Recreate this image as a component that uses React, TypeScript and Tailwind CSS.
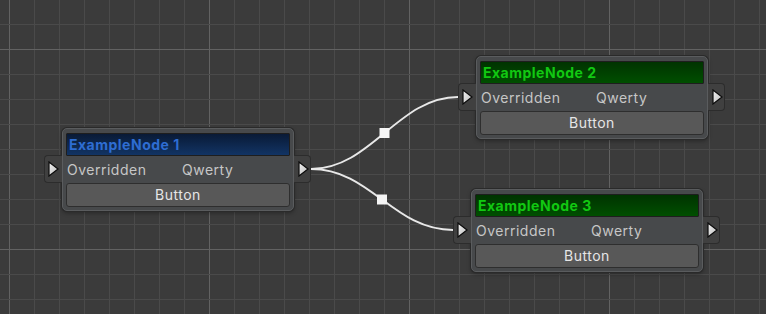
import React from "react";

const W = 766;
const H = 314;

function GridAndEdges() {
  const vx: number[] = [];
  for (let x = 9; x <= W; x += 25) vx.push(x);
  const hy: number[] = [];
  for (let y = -1; y <= H; y += 25) hy.push(y);
  const isMajorX = (x: number) => (x - 9) % 200 === 0;
  const isMajorY = (y: number) => (y - 49) % 200 === 0;
  const start = { x: 311, y: 169 };
  const ends = [
    { x: 458, y: 97 },
    { x: 453, y: 230 },
  ];
  const d = 60;
  return (
    <svg className="absolute inset-0" width={W} height={H} viewBox={`0 0 ${W} ${H}`}>
      {vx.map((x) => (
        <line
          key={"x" + x}
          x1={x + 0.5}
          y1={0}
          x2={x + 0.5}
          y2={H}
          stroke={isMajorX(x) ? "#626262" : "#4a4a4a"}
          strokeWidth={1}
        />
      ))}
      {hy.map((y) => (
        <line
          key={"y" + y}
          x1={0}
          y1={y + 0.5}
          x2={W}
          y2={y + 0.5}
          stroke={isMajorY(y) ? "#626262" : "#4a4a4a"}
          strokeWidth={1}
        />
      ))}
      {ends.map((e, i) => {
        const mx = (start.x + e.x) / 2;
        const my = (start.y + e.y) / 2;
        return (
          <g key={i}>
            <path
              d={`M ${start.x} ${start.y} C ${start.x + d} ${start.y}, ${e.x - d} ${e.y}, ${e.x} ${e.y}`}
              fill="none"
              stroke="#e8e8e8"
              strokeWidth={2}
            />
            <rect x={mx - 5} y={my - 5} width={10} height={10} fill="#f4f4f4" />
          </g>
        );
      })}
    </svg>
  );
}

function Triangle() {
  return (
    <svg width="11" height="16" viewBox="0 0 11 16" className="block">
      <defs>
        <linearGradient id="tri" x1="0" y1="0" x2="1" y2="1">
          <stop offset="0" stopColor="#f2f2f2" />
          <stop offset="1" stopColor="#bdbdbd" />
        </linearGradient>
      </defs>
      <polygon points="1,1 10,8 1,15" fill="url(#tri)" stroke="#0c0c0c" strokeWidth="1.2" strokeLinejoin="miter" />
    </svg>
  );
}

function Node({
  left,
  top,
  title,
  variant,
}: {
  left: number;
  top: number;
  title: string;
  variant: "blue" | "green";
}) {
  const header =
    variant === "blue"
      ? "bg-[linear-gradient(to_bottom,#091a36,#123464)] text-[#2e6dd2]"
      : "bg-[linear-gradient(to_bottom,#003300,#004f00)] text-[#12c812]";
  return (
    <div className="absolute" style={{ left, top }}>
      <div className="relative w-[232px] h-[83px] rounded-[5px] bg-[#47494b] border border-[#5a5c5e] shadow-[0_0_0_1px_#2a2a2a,0_2px_4px_rgba(0,0,0,0.35)] pt-[4px] px-[3px] flex flex-col">
        <div
          className={`h-[23px] shrink-0 rounded-[1px] border border-[#1e1e1e] px-[2px] flex items-center text-[14px] font-bold tracking-[0.5px] leading-none ${header}`}
        >
          {title}
        </div>
        <div className="h-[27px] shrink-0 flex items-center text-[14px] tracking-[0.5px] text-[#c6c6c6] leading-none">
          <span className="w-[116px] pl-[1px]">Overridden</span>
          <span>Qwerty</span>
        </div>
        <div className="h-[24px] shrink-0 rounded-[3px] bg-[#585858] border border-[#2e2e2e] flex items-center justify-center text-[14px] tracking-[0.5px] text-[#e6e6e6] leading-none">
          Button
        </div>
      </div>
      <div className="absolute left-[-18px] top-[27px] w-[18px] h-[28px] rounded-l-[4px] bg-[#404040] border border-r-0 border-[#2c2c2c] flex items-center pl-[3px]">
        <Triangle />
      </div>
      <div className="absolute left-[232px] top-[27px] w-[17px] h-[28px] rounded-r-[4px] bg-[#404040] border border-l-0 border-[#2c2c2c] flex items-center pl-[4px]">
        <Triangle />
      </div>
    </div>
  );
}

export default function App() {
  return (
    <div
      className="relative w-[766px] h-[314px] overflow-hidden bg-[#3b3b3b]"
      style={{ fontFamily: "Inter, 'Noto Sans', sans-serif" }}
    >
      <GridAndEdges />
      <Node left={62} top={128} title="ExampleNode 1" variant="blue" />
      <Node left={476} top={56} title="ExampleNode 2" variant="green" />
      <Node left={471} top={189} title="ExampleNode 3" variant="green" />
    </div>
  );
}
